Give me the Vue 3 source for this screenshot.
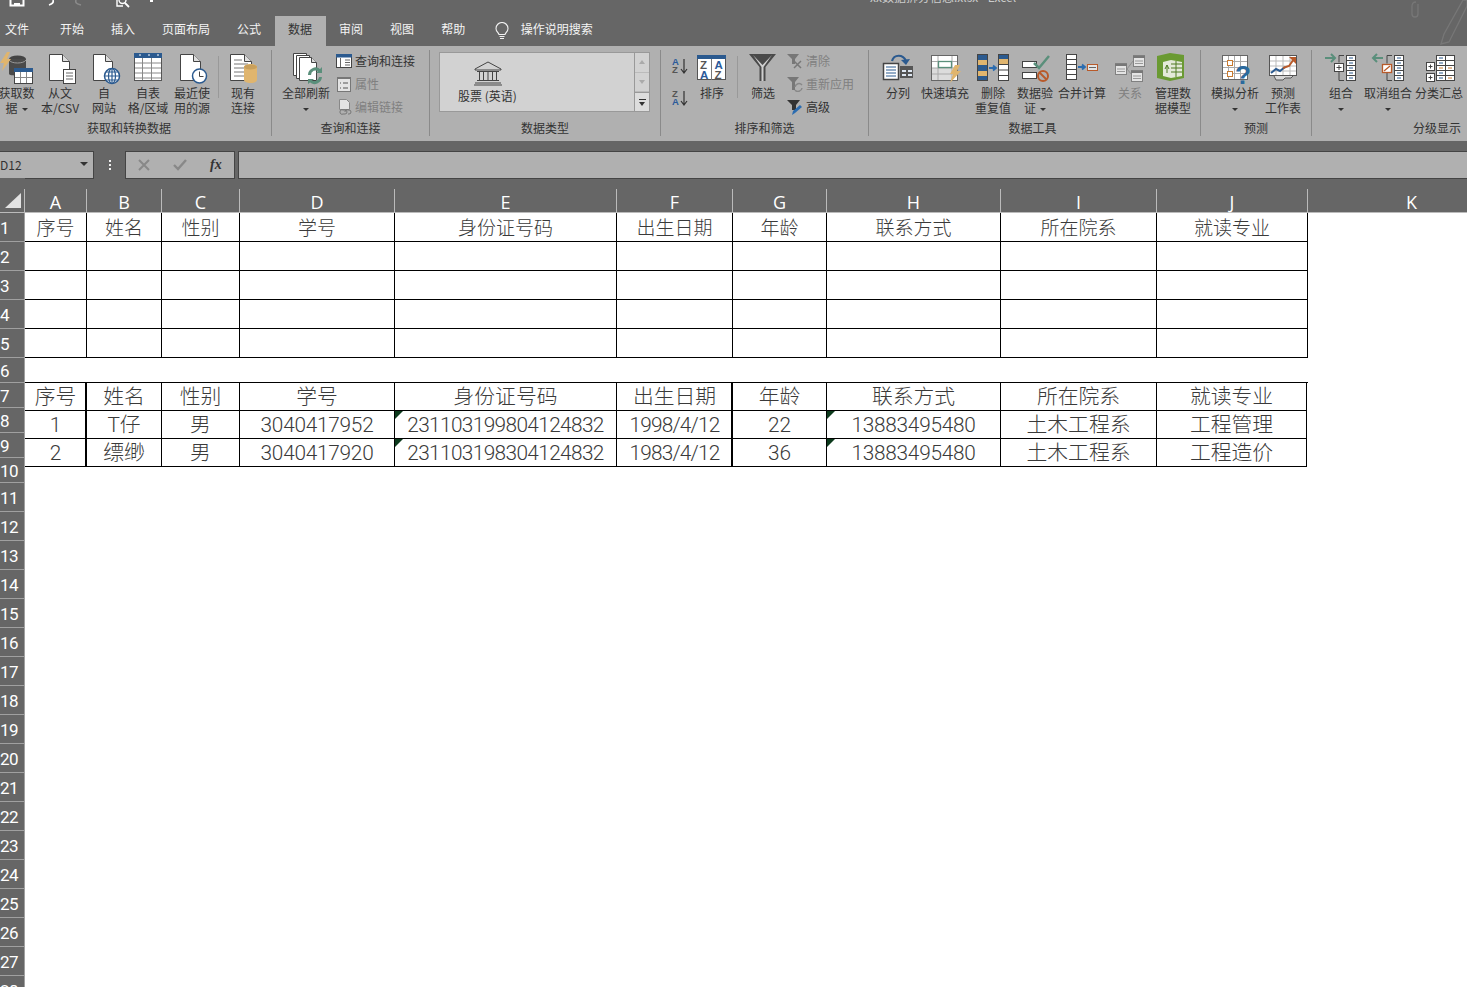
<template>
  <div class="app">
    <div class="titlebar">
      <div class="qat">
        <svg class="qat-save" width="16" height="7" viewBox="0 0 16 7"><path d="M1.500 0v5.500h13V0" fill="none" stroke="#fff" stroke-width="2"/><rect x="5" y="3" width="6" height="2" fill="#fff"/></svg>
        <svg class="qat-undo" width="8" height="6" viewBox="0 0 8 6"><path d="M6 0c1 3-1 4-4 5" fill="none" stroke="#fff" stroke-width="1.600"/></svg>
        <svg class="qat-redo" width="8" height="6" viewBox="0 0 8 6"><path d="M1 0c-1 3 1 4 5 5" fill="none" stroke="#8a8a8a" stroke-width="1.600"/></svg>
        <svg class="qat-print" width="14" height="8" viewBox="0 0 14 8"><path d="M1 0v6h6" fill="none" stroke="#fff" stroke-width="1.400"/><circle cx="6.500" cy="0" r="3.500" fill="none" stroke="#fff" stroke-width="1.400"/><path d="M9 3l4 4" stroke="#fff" stroke-width="1.800"/></svg>
        <span class="qat-caret"></span>
      </div>
      <div class="doc-title">xx数据拆分信息.xlsx - Excel</div>
      <svg class="deco" width="60" height="46" viewBox="0 0 60 46"><path d="M9 2c-3 0-4 2-4 4v8c0 4 6 4 6 0V4" fill="none" stroke="#777" stroke-width="1.300"/><path d="M34 44l3-10L56 0h4v6L42 42z" fill="none" stroke="#777" stroke-width="1.300"/></svg>
    </div>

    <div class="tabs">
      <div v-for="t in tabs" :key="t" class="tab" :class="{ active: t === '数据', first: t === '文件' }">{{ t }}</div>
      <svg class="bulb" width="14" height="18" viewBox="0 0 14 18"><path d="M4 12.500C3 10 1 9.500 1 6.500a6 6 0 0 1 12 0c0 3-2 3.500-3 6zM4.500 14.500h5M5 16.500h4" fill="none" stroke="#f2f2f2" stroke-width="1.100"/></svg>
      <div class="tell">操作说明搜索</div>
    </div>

    <div class="ribbon">
      <!-- 获取和转换数据 -->
      <div class="group g1">
        <div class="group-body">
          <div class="btn w43">
            <svg class="ic" viewBox="0 0 34 32"><ellipse cx="17.500" cy="7" rx="8.500" ry="3.500" fill="#444"/><path d="M9 7v15c0 2 17 2 17 0V7z" fill="#4a4a4a"/><path d="M9 8c2 4 15 4 17 0" fill="none" stroke="#999"/><rect x="14.500" y="16.500" width="18" height="15" fill="#fff" stroke="#444"/><rect x="14" y="16" width="19" height="4" fill="#2b5a8f"/><path d="M15 25.500h17M20.500 20v11M26.500 20v11" stroke="#888"/><path d="M7 0L0 11h4L2 19l9-12H7l3-7z" fill="#e0b56e"/></svg>
            <div class="lbl">获取数<br>据<i class="caret"></i></div>
          </div>
          <div class="btn w44">
            <svg class="ic" viewBox="0 0 34 32"><path d="M6.500 2.500h13l7 7v19h-20z" fill="#fff" stroke="#444"/><path d="M19.500 2.500v7h7" fill="#ddd" stroke="#444"/><rect x="20.500" y="17.500" width="12" height="14" fill="#fff" stroke="#444"/><path d="M23 21h7M23 24h7M23 27h7" stroke="#666"/></svg>
            <div class="lbl">从文<br>本/CSV</div>
          </div>
          <div class="btn w44">
            <svg class="ic" viewBox="0 0 34 32"><path d="M6.500 2.500h12l7 7v19h-19z" fill="#fff" stroke="#444"/><path d="M18.500 2.500v7h7" fill="#ddd" stroke="#444"/><circle cx="25" cy="24" r="7.500" fill="#fff" stroke="#2b5a8f" stroke-width="1.500"/><path d="M17 24h16M25 16v16M19 20h12M19 28h12" stroke="#2b5a8f" stroke-width="1.200"/><ellipse cx="25" cy="24" rx="3.500" ry="7.500" fill="none" stroke="#2b5a8f" stroke-width="1.200"/></svg>
            <div class="lbl">自<br>网站</div>
          </div>
          <div class="btn w44">
            <svg class="ic" viewBox="0 0 34 32"><rect x="3.500" y="1.500" width="27" height="27" fill="#fff" stroke="#555"/><rect x="3" y="1" width="28" height="5" fill="#2b5a8f"/><path d="M4 11h26M4 16h26M4 21h26M4 26h26M11.500 6v22M20.500 6v22" stroke="#888"/><path d="M8 3h2M17 3h2M26 3h2" stroke="#fff"/></svg>
            <div class="lbl">自表<br>格/区域</div>
          </div>
          <div class="btn w44">
            <svg class="ic" viewBox="0 0 34 32"><path d="M5.500 2.500h13l7 7v19h-20z" fill="#fff" stroke="#444"/><path d="M18.500 2.500v7h7" fill="#ddd" stroke="#444"/><circle cx="24.500" cy="24" r="7" fill="#fff" stroke="#2b5a8f" stroke-width="1.500"/><path d="M24.500 19.500v5h4" fill="none" stroke="#444"/></svg>
            <div class="lbl">最近使<br>用的源</div>
          </div>
          <div class="vsep sep1"></div>
          <div class="btn w42 exist">
            <svg class="ic" viewBox="0 0 34 32"><path d="M4.500 2.500h14l7 7v19h-21z" fill="#fff" stroke="#444"/><path d="M18.500 2.500v7h7" fill="#ddd" stroke="#444"/><path d="M8 8h8M8 12h14M8 16h14M8 20h14M8 24h14" stroke="#777"/><path d="M18 15c0-4 13-4 13 0v13c0 4-13 4-13 0z" fill="#e0b56e"/><ellipse cx="24.500" cy="15" rx="6.500" ry="2.500" fill="#c9a05c"/></svg>
            <div class="lbl">现有<br>连接</div>
          </div>
        </div>
        <div class="group-label">获取和转换数据</div>
      </div>

      <!-- 查询和连接 -->
      <div class="group g2">
        <div class="group-body">
          <div class="btn w50">
            <svg class="ic" viewBox="0 0 34 32"><path d="M4.500 1.500h13v22h-13z" fill="#fff" stroke="#444"/><path d="M7.500 3.500h13v23h-13z" fill="#fff" stroke="#444"/><path d="M10.500 5.500h12l5 5v18h-17z" fill="#fff" stroke="#444"/><path d="M22.500 5.500v5h5" fill="#ddd" stroke="#444"/><path d="M20.500 23a6 6 0 0 1 10-4.500M31.500 25a6 6 0 0 1-10 4" fill="none" stroke="#5a8f7b" stroke-width="3"/><path d="M27 21h6v-6zM25 27h-6v5z" fill="#5a8f7b"/></svg>
            <div class="lbl">全部刷新<br><i class="caret solo"></i></div>
          </div>
          <div class="small-col">
            <div class="small">
              <svg class="sm" viewBox="0 0 16 14"><rect x=".5" y=".5" width="15" height="13" fill="#fff" stroke="#444"/><rect y="0" width="16" height="3.500" fill="#2b5a8f"/><path d="M4.500 4v9M9 6h5M9 8.500h5M9 11h5" stroke="#666"/></svg>
              <span>查询和连接</span>
            </div>
            <div class="small off">
              <svg class="sm" viewBox="0 0 16 16"><rect x="1.500" y="1.500" width="13" height="14" fill="#e4e4e4" stroke="#777"/><rect x="1" y="1" width="14" height="2" fill="#777"/><path d="M4 7h1M7 7h5M4 12h1M7 12h5" stroke="#555"/></svg>
              <span>属性</span>
            </div>
            <div class="small off">
              <svg class="sm" viewBox="0 0 16 16"><path d="M3.500.5h7l3 3v7h-10z" fill="#e4e4e4" stroke="#888"/><path d="M4 13a2 2 0 0 1 3-2h2a2 2 0 0 1 0 4H7a2 2 0 0 1-3-2zM9 13a2 2 0 0 1 3-2h1a2 2 0 0 1 0 4h-1" fill="none" stroke="#777"/></svg>
              <span>编辑链接</span>
            </div>
          </div>
        </div>
        <div class="group-label">查询和连接</div>
      </div>

      <!-- 数据类型 -->
      <div class="group g3">
        <div class="group-body">
          <div class="gallery">
            <div class="stock">
              <svg class="stock-ic" width="28" height="25" viewBox="0 0 28 25"><path d="M14 1L1 8v1h26V8z" fill="#d2d2d2" stroke="#444"/><path d="M3 10.500h22M3 19.500h22M1 22h26M0 24h28" stroke="#444"/><path d="M5.500 10.500v9M9.500 10.500v9M14 10.500v9M18.500 10.500v9M22.500 10.500v9" stroke="#444"/></svg>
              <div class="stock-lbl">股票 (英语)</div>
            </div>
            <div class="scroll">
              <div class="sc"><i class="tri up"></i></div>
              <div class="sc"><i class="tri"></i></div>
              <div class="sc more"><b></b><i class="tri dark"></i></div>
            </div>
          </div>
        </div>
        <div class="group-label">数据类型</div>
      </div>

      <!-- 排序和筛选 -->
      <div class="group g4">
        <div class="group-body">
          <div class="sort-col">
            <svg class="sm2" viewBox="0 0 18 18"><text x="1" y="8" class="az blue">A</text><text x="1" y="16" class="az grey">Z</text><path d="M13 2v13M10 12l3 4 3-4" fill="none" stroke="#333" stroke-width="1.200"/></svg>
            <svg class="sm2" viewBox="0 0 18 18"><text x="1" y="8" class="az grey">Z</text><text x="1" y="16" class="az blue">A</text><path d="M13 2v13M10 12l3 4 3-4" fill="none" stroke="#333" stroke-width="1.200"/></svg>
          </div>
          <div class="btn w40">
            <svg class="ic" viewBox="0 0 34 32"><rect x="2.500" y="3.500" width="28" height="24" fill="#fff" stroke="#555"/><rect x="2" y="3" width="29" height="4" fill="#2b5a8f"/><path d="M16.500 7v21" stroke="#777"/><text x="5" y="17" class="az2 grey">Z</text><text x="19.500" y="17" class="az2 blue">A</text><text x="5" y="26.500" class="az2 blue">A</text><text x="19.500" y="26.500" class="az2 grey">Z</text></svg>
            <div class="lbl">排序</div>
          </div>
          <div class="vsep sep2"></div>
          <div class="btn w40">
            <svg class="ic" viewBox="0 0 34 32"><path d="M3 2h27L19.500 15v14h-6V15z" fill="#4a4a4a"/><path d="M7 3l8.500 12v14h2V15L26 3l-9.500 10z" fill="#cfcfcf"/></svg>
            <div class="lbl">筛选</div>
          </div>
          <div class="small-col filter-col">
            <div class="small off">
              <svg class="sm" viewBox="0 0 16 16"><path d="M0 1h12L8 6v5H5V6z" fill="#777"/><path d="M7 8l7 7M14 8l-7 7" stroke="#777" stroke-width="1.500"/></svg>
              <span>清除</span>
            </div>
            <div class="small off">
              <svg class="sm" viewBox="0 0 16 16"><path d="M0 1h12L8 6v8H5V6z" fill="#777"/><path d="M8 11a4 4 0 0 1 7-2M15 12a4 4 0 0 1-7 2" fill="none" stroke="#888" stroke-width="1.500"/></svg>
              <span>重新应用</span>
            </div>
            <div class="small">
              <svg class="sm" viewBox="0 0 16 16"><path d="M0 1h13L9 6v5H5V6z" fill="#333"/><path d="M5 16l1-4 7-6 2 2-7 6z" fill="#2b6cb0"/></svg>
              <span>高级</span>
            </div>
          </div>
        </div>
        <div class="group-label">排序和筛选</div>
      </div>

      <!-- 数据工具 -->
      <div class="group g5">
        <div class="group-body">
          <div class="btn w40">
            <svg class="ic" viewBox="0 0 34 32"><rect x="2.500" y="11.500" width="15" height="16" fill="#fff" stroke="#444" stroke-width="1.500"/><path d="M5 15h10M5 18h10M5 21h10M5 24h10" stroke="#2b5a8f"/><rect x="19" y="14" width="13" height="12" fill="#555"/><path d="M21 18h4v2h-4zM27 18h4v2h-4zM21 22h4v2h-4zM27 22h4v2h-4z" fill="#dfe8f2"/><path d="M11 9c2-7 11-7 14 0" fill="none" stroke="#2b5a8f" stroke-width="2.200"/><path d="M20 8l5 5 4-6z" fill="#2b5a8f"/></svg>
            <div class="lbl">分列</div>
          </div>
          <div class="btn w54">
            <svg class="ic" viewBox="0 0 34 32"><rect x="3.500" y="3.500" width="26" height="25" fill="#fff" stroke="#666"/><rect x="4" y="16" width="20" height="12" fill="#dcdcdc"/><path d="M4 9.500h25M4 16h25M4 22h25M10 4v24M24 4v24" stroke="#aaa"/><rect x="10.500" y="9.500" width="13" height="6" fill="#fff" stroke="#5a8f7b" stroke-width="1.300"/><path d="M27 13l-5 9h3l-3 9 11-12h-4l3-6z" fill="#e0b56e"/></svg>
            <div class="lbl">快速填充</div>
          </div>
          <div class="btn w42">
            <svg class="ic" viewBox="0 0 34 32"><path d="M1 2h11v6H1zM1 13h11v6H1zM1 24h11v5H1z" fill="#2b5a8f"/><path d="M1 8h11v5H1zM1 19h11v5H1z" fill="#e0b56e"/><rect x="1.500" y="2.500" width="10" height="26" fill="none" stroke="#444"/><rect x="22.500" y="2.500" width="10" height="26" fill="#fff" stroke="#444"/><path d="M23 3h9v4h-9z" fill="#2b5a8f"/><path d="M23 7h9v5h-9z" fill="#e0b56e"/><path d="M23 12.500h9M23 18h9M23 23.500h9" stroke="#444"/><path d="M13 16h6M17 13.500l3 2.500-3 2.500" fill="none" stroke="#2b6cb0" stroke-width="1.800"/></svg>
            <div class="lbl">删除<br>重复值</div>
          </div>
          <div class="btn w42">
            <svg class="ic" viewBox="0 0 34 32"><rect x="4.500" y="9.500" width="14" height="6" fill="#fff" stroke="#444"/><rect x="4.500" y="20.500" width="14" height="6" fill="#fff" stroke="#444"/><path d="M16 11l5 5 10-12" fill="none" stroke="#5a8f7b" stroke-width="2.500"/><circle cx="25" cy="24" r="5" fill="none" stroke="#b85a2a" stroke-width="2"/><path d="M21.500 20.500l7 7" stroke="#b85a2a" stroke-width="2"/></svg>
            <div class="lbl">数据验<br>证<i class="caret"></i></div>
          </div>
          <div class="btn w52">
            <svg class="ic" viewBox="0 0 34 32"><rect x="1.500" y="2.500" width="10" height="25" fill="#fff" stroke="#444"/><path d="M2 7.500h9M2 12.500h9M2 17.500h9M2 22.500h9" stroke="#444"/><path d="M13 15h6M17 12.500l3 2.500-3 2.500" fill="none" stroke="#2b6cb0" stroke-width="1.800"/><rect x="22.500" y="12.500" width="10" height="6" fill="#e4e4e4" stroke="#b85a2a"/><path d="M24 15.500h7" stroke="#666"/></svg>
            <div class="lbl">合并计算</div>
          </div>
          <div class="btn w44 dim">
            <svg class="ic" viewBox="0 0 34 32"><path d="M14 17l6-8M14 17l5 6" stroke="#8f8f8f"/><rect x="2.500" y="11.500" width="11" height="11" fill="#e4e4e4" stroke="#808080"/><rect x="20.500" y="3.500" width="11" height="11" fill="#e4e4e4" stroke="#808080"/><rect x="18.500" y="18.500" width="11" height="11" fill="#e4e4e4" stroke="#808080"/><path d="M2 12h12v2H2zM20 4h12v2H20zM18 19h12v2H18z" fill="#777"/><path d="M4 17h8M4 19.500h8M22 9h8M22 11.500h8M20 24h8M20 26.500h8" stroke="#999"/></svg>
            <div class="lbl">关系</div>
          </div>
          <div class="btn w42">
            <svg class="ic" viewBox="0 0 34 32"><path d="M1 4l13-3 14 2v23l-14 3-13-3z" fill="#6a9a32"/><path d="M7 10l8-2v18l-8-2z" fill="#e4ead8"/><path d="M15 8l11 2v14l-11 2z" fill="#e4ead8"/><path d="M15 12h11M15 16h11M15 20h11M20 9v16M9 17l2-4 2 4M11 13v8" fill="none" stroke="#4e7a22"/></svg>
            <div class="lbl">管理数<br>据模型</div>
          </div>
        </div>
        <div class="group-label">数据工具</div>
      </div>

      <!-- 预测 -->
      <div class="group g6">
        <div class="group-body">
          <div class="btn w50">
            <svg class="ic" viewBox="0 0 34 32"><rect x="4.500" y="3.500" width="25" height="24" fill="#fff" stroke="#666"/><path d="M5 9.500h24M5 15.500h24M5 21.500h24M10.500 4v23M16.500 4v23M22.500 4v23" stroke="#aaa"/><rect x="9.500" y="8.500" width="5" height="5" fill="#fff" stroke="#c87a30"/><rect x="9.500" y="19.500" width="5" height="5" fill="#fff" stroke="#c87a30"/><text x="17" y="32" class="q">?</text></svg>
            <div class="lbl">模拟分析<br><i class="caret solo"></i></div>
          </div>
          <div class="btn w46">
            <svg class="ic" viewBox="0 0 34 32"><rect x="3.500" y="3.500" width="27" height="20" fill="#fff" stroke="#555"/><path d="M4 9h26M4 14h26M4 19h26M10 4v19M17 4v19M24 4v19" stroke="#bbb"/><path d="M5 21l5-4 4 2 5-4" fill="none" stroke="#2b5a8f" stroke-width="2"/><path d="M17 16l6-2 5-7" fill="none" stroke="#b85a2a" stroke-width="2"/><path d="M23 5h7v7z" fill="#b85a2a"/><path d="M8 24l2 4h7l2-2h6l2-2" fill="#d8d8d8" stroke="#555"/></svg>
            <div class="lbl">预测<br>工作表</div>
          </div>
        </div>
        <div class="group-label">预测</div>
      </div>

      <!-- 分级显示 -->
      <div class="group g7">
        <div class="group-body">
          <div class="btn w42">
            <svg class="ic" viewBox="0 0 34 32"><path d="M1 6h10M7 2l4 4-4 4" fill="none" stroke="#5a8f7b" stroke-width="2"/><path d="M20 3.500h-5v7M15 20v8.500h5" fill="none" stroke="#444"/><rect x="10.500" y="11.500" width="9" height="8" fill="#fff" stroke="#444"/><path d="M12.500 15.500h5M15 13v5" stroke="#444"/><rect x="22.500" y="3.500" width="9" height="25" fill="#fff" stroke="#444"/><path d="M23 8.500h8M23 13.500h8M23 18.500h8M23 23.500h8" stroke="#444"/><path d="M25 6h4M25 11h4M25 16h4M25 21h4M25 26h4" stroke="#2b5a8f"/></svg>
            <div class="lbl">组合<br><i class="caret solo"></i></div>
          </div>
          <div class="btn w52">
            <svg class="ic" viewBox="0 0 34 32"><path d="M12 6H2M6 2L2 6l4 4" fill="none" stroke="#5a8f7b" stroke-width="2"/><path d="M21 3.500h-5v8M16 20v8.500h5" fill="none" stroke="#444"/><rect x="11.500" y="12.500" width="9" height="8" fill="#fff" stroke="#b85a2a" stroke-width="1.300"/><path d="M13 19l6-5" stroke="#b85a2a" stroke-width="1.300"/><rect x="23.500" y="3.500" width="9" height="25" fill="#fff" stroke="#444"/><path d="M24 8.500h8M24 13.500h8M24 18.500h8M24 23.500h8" stroke="#444"/><path d="M26 6h4M26 11h4M26 16h4M26 21h4M26 26h4" stroke="#2b5a8f"/></svg>
            <div class="lbl">取消组合<br><i class="caret solo"></i></div>
          </div>
          <div class="btn w50">
            <svg class="ic" viewBox="0 0 34 32"><rect x="14.500" y="3.500" width="18" height="25" fill="#fff" stroke="#444"/><path d="M15 8.500h17M15 13.500h17M15 18.500h17M15 23.500h17M23.500 4v24" stroke="#444"/><path d="M17 6h4M17 11h4M17 21h4M17 26h4" stroke="#2b5a8f"/><path d="M17 16h4M26 16h4M26 26h4" stroke="#c87a30"/><rect x="4.500" y="10.500" width="8" height="8" fill="#fff" stroke="#444"/><rect x="4.500" y="21.500" width="8" height="8" fill="#fff" stroke="#444"/><path d="M6.500 14.500h4M8.500 12.500v4M6.500 25.500h4M8.500 23.500v4" stroke="#444"/></svg>
            <div class="lbl">分类汇总</div>
          </div>
        </div>
        <div class="group-label right">分级显示</div>
      </div>
    </div>

    <div class="formula">
      <div class="namebox"><span>D12</span><i class="tri dark"></i></div>
      <div class="dots"><b></b><b></b><b></b></div>
      <div class="fx-box">
        <svg width="12" height="12" viewBox="0 0 12 12"><path d="M1 1l10 10M11 1L1 11" stroke="#888" stroke-width="2"/></svg>
        <svg width="14" height="12" viewBox="0 0 14 12"><path d="M1 6l4 4 8-9" fill="none" stroke="#888" stroke-width="2.400"/></svg>
        <span class="fx-f">fx</span>
      </div>
      <div class="fx-input"></div>
    </div>

    <div class="sheet">
      <div class="rowheads">
        <div class="corner"><i></i></div>
        <div v-for="r in rowHeads" :key="r.n" class="rowhead" :class="r.cls">{{ r.n }}</div>
      </div>
      <div class="body">
        <div class="colheads">
          <div v-for="c in 'ABCDEFGHIJK'" :key="c" class="colhead">{{ c }}</div>
        </div>
        <div class="grid first">
          <div v-for="h in headers" :key="h" class="cell">{{ h }}</div>
          <template v-for="n in 4" :key="n">
            <div v-for="h in headers" :key="h" class="cell"></div>
          </template>
        </div>
        <div class="grid second">
          <div v-for="h in headers" :key="h" class="cell">{{ h }}</div>
          <template v-for="row in students" :key="row[0]">
            <div v-for="(v, i) in row" :key="i" class="cell val" :class="{ flag: i === 4 || i === 7, long: i === 4, date: i === 5, num: i === 3 || i === 7 }">{{ v }}</div>
          </template>
        </div>
      </div>
    </div>
  </div>
</template>

<script setup>
const tabs = ['文件', '开始', '插入', '页面布局', '公式', '数据', '审阅', '视图', '帮助']

const headers = ['序号', '姓名', '性别', '学号', '身份证号码', '出生日期', '年龄', '联系方式', '所在院系', '就读专业']

const students = [
  ['1', 'T仔', '男', '3040417952', '231103199804124832', '1998/4/12', '22', '13883495480', '土木工程系', '工程管理'],
  ['2', '缥缈', '男', '3040417920', '231103198304124832', '1983/4/12', '36', '13883495480', '土木工程系', '工程造价']
]

// the row headers don't line up with the rows in this shot, rows 6-10 are squeezed
const rowHeads = Array.from({ length: 28 }, (_, i) => {
  const n = i + 1
  return { n, cls: n >= 6 && n <= 10 ? 'squeezed' : '' }
})
</script>

<style scoped>
.app {
  width: 1467px;
  height: 987px;
  overflow: hidden;
  background: #fff;
  font-family: "Noto Sans CJK SC", "Liberation Sans", sans-serif;
  font-size: 12px;
  color: #333;
}

.titlebar {
  height: 16px;
  background: #666;
  display: flex;
  position: relative;
}
.qat {
  display: flex;
  align-items: flex-start;
  padding-left: 9px;
}
.qat-undo { margin-left: 22px; }
.qat-redo { margin-left: 20px; }
.qat-print { margin-left: 33px; }
.qat-caret {
  margin-left: 20px;
  width: 3px;
  height: 2px;
  background: #fff;
}
.doc-title {
  position: absolute;
  left: 870px;
  top: -9px;
  font-size: 12px;
  line-height: 12px;
  color: #ccc;
}
.deco {
  position: absolute;
  right: 0;
  top: 0;
}

.tabs {
  height: 30px;
  background: #666;
  display: flex;
  align-items: stretch;
}
.tab {
  padding: 0 13.500px;
  line-height: 26px;
  color: #f4f4f4;
}
.tab.first {
  padding-left: 5px;
  padding-right: 17.500px;
}
.tab.active {
  background: #b0b0b0;
  color: #333;
}
.bulb {
  margin: 6px 0 0 16px;
}
.tell {
  margin-left: 12px;
  line-height: 26px;
  color: #f4f4f4;
}

.ribbon {
  height: 95px;
  background: #b0b0b0;
  display: flex;
  padding-top: 4px;
  box-sizing: border-box;
  margin-left: -5px;
  width: 1480px;
}
.group {
  height: 86px;
  box-sizing: border-box;
  border-right: 1px solid #8a8a8a;
  display: flex;
  flex-direction: column;
  flex: none;
}
.group-body {
  height: 72px;
  display: flex;
  align-items: flex-start;
}
.group-label {
  text-align: center;
  line-height: 16px;
  color: #333;
}
.group-label.right {
  text-align: right;
  padding-right: 19px;
}
.g1 { width: 277px; }
.g1 .group-label { padding-right: 8px; }
.g2 { width: 158px; }
.g2 .group-body { padding-left: 9px; }
.g3 { width: 231px; }
.g3 .group-body { padding-left: 9px; }
.g4 { width: 208px; }
.g4 .group-body { padding-left: 10px; }
.g5 { width: 332px; }
.g5 .group-body { padding-left: 9px; }
.g5 .group-label { padding-right: 4px; }
.g6 { width: 111px; }
.g6 .group-body { padding-left: 9px; }
.g7 { width: 168px; border-right: 0; }
.g7 .group-body { padding-left: 8px; }

.btn {
  display: flex;
  flex-direction: column;
  align-items: center;
  flex: none;
  padding-top: 2px;
}
.w40 { width: 40px; }
.w42 { width: 42px; }
.w43 { width: 43px; }
.w44 { width: 44px; }
.w46 { width: 46px; }
.w50 { width: 50px; }
.w52 { width: 52px; }
.w54 { width: 54px; }
.ic {
  width: 34px;
  height: 32px;
  flex: none;
  overflow: visible;
}
.lbl {
  margin-top: 1px;
  line-height: 15px;
  text-align: center;
  white-space: nowrap;
  color: #333;
}
.dim .lbl {
  color: #808080;
}
.caret {
  display: inline-block;
  width: 0;
  height: 0;
  margin-left: 4px;
  vertical-align: middle;
  border: 3px solid transparent;
  border-top: 3px solid #333;
  border-bottom: 0;
}
.caret.solo {
  margin-left: 0;
}
.vsep {
  width: 1px;
  height: 42px;
  background: #999;
  flex: none;
  margin-top: 6px;
}
.sep1 { margin-left: 4px; }
.exist { margin-left: 3px; }
.sep2 { margin: 6px 5px 0 5px; }

.small-col {
  display: flex;
  flex-direction: column;
  margin-left: 5px;
  margin-top: -1px;
}
.filter-col { margin-left: 4px; }
.small {
  height: 23px;
  display: flex;
  align-items: center;
  gap: 3px;
  white-space: nowrap;
}
.small.off {
  color: #808080;
}
.sm {
  width: 16px;
  height: 16px;
  flex: none;
}

.gallery {
  width: 211px;
  height: 60px;
  margin-top: 2px;
  border: 1px solid #999;
  box-sizing: border-box;
  background: #d2d2d2;
  display: flex;
}
.stock {
  flex: 1;
  padding: 8px 0 0 18px;
}
.stock-ic {
  display: block;
  margin-left: 16px;
}
.stock-lbl {
  margin-top: 1px;
  line-height: 18px;
}
.scroll {
  width: 14px;
  border-left: 1px solid #999;
  display: flex;
  flex-direction: column;
}
.sc {
  flex: 1;
  border-bottom: 1px solid #bbb;
  display: flex;
  flex-direction: column;
  align-items: center;
  justify-content: center;
}
.sc.more {
  border-top: 1px solid #999;
  border-bottom: 0;
  background: #ddd;
  flex: none;
  height: 18px;
}
.sc.more b {
  width: 7px;
  height: 1px;
  background: #333;
  margin-bottom: 2px;
}
.tri {
  width: 0;
  height: 0;
  border: 3.500px solid transparent;
  border-top: 4px solid #aaa;
  border-bottom: 0;
}
.tri.up {
  border-top: 0;
  border-bottom: 4px solid #aaa;
}
.tri.dark {
  border-top-color: #333;
}

.sort-col {
  width: 18px;
  display: flex;
  flex-direction: column;
  gap: 14px;
  padding-top: 7px;
  margin-right: 3px;
}
.sm2 {
  width: 18px;
  height: 18px;
}
.az {
  font: 700 9.500px "Liberation Sans", sans-serif;
}
.az2 {
  font: 700 11.500px "Liberation Sans", sans-serif;
}
.blue { fill: #2b5a9a; }
.grey { fill: #555; }
.q {
  font: 700 26px "Liberation Sans", sans-serif;
  fill: #2b6a9e;
}

.formula {
  height: 48px;
  background: #666;
  display: flex;
  align-items: flex-start;
  padding-top: 10px;
  box-sizing: border-box;
}
.namebox {
  width: 94px;
  height: 28px;
  box-sizing: border-box;
  background: #b0b0b0;
  border: 1px solid #444;
  border-left: 0;
  display: flex;
  align-items: center;
  justify-content: space-between;
  padding-right: 5px;
  padding-bottom: 2px;
  font-size: 12px;
  color: #333;
}
.namebox .tri {
  border-width: 4px;
  border-bottom: 0;
}
.dots {
  width: 31px;
  height: 28px;
  display: flex;
  flex-direction: column;
  align-items: center;
  justify-content: center;
  gap: 2px;
}
.dots b {
  width: 2px;
  height: 2px;
  background: #eee;
}
.fx-box {
  width: 110px;
  height: 28px;
  box-sizing: border-box;
  background: #b0b0b0;
  border: 1px solid #444;
  display: flex;
  align-items: center;
  padding-left: 12px;
  gap: 23px;
}
.fx-f {
  font: italic 700 14px "Liberation Serif", serif;
  color: #333;
}
.fx-input {
  margin-left: 3px;
  flex: 1;
  height: 28px;
  box-sizing: border-box;
  background: #b0b0b0;
  border: 1px solid #444;
  border-right: 0;
}

.sheet {
  display: flex;
  height: 798px;
  margin-top: -11px;
  padding-top: 11px;
}
.rowheads {
  width: 25px;
  flex: none;
  background: #666;
  margin-top: -11px;
  padding-top: 11px;
  box-sizing: border-box;
}
.corner {
  height: 24px;
  box-sizing: border-box;
  border-right: 1px solid #bbb;
  border-bottom: 1px solid #bbb;
  position: relative;
}
.corner i {
  position: absolute;
  left: 5px;
  top: 4px;
  width: 0;
  height: 0;
  border-left: 16px solid transparent;
  border-bottom: 15px solid #e2e2e2;
}
.rowhead {
  height: 29px;
  box-sizing: border-box;
  border-bottom: 1px solid #a0a0a0;
  border-right: 1px solid #a0a0a0;
  color: #fff;
  font: 17px/30px Roboto, "Liberation Sans", sans-serif;
  padding-left: 0;
  white-space: nowrap;
  letter-spacing: -.6px;
  overflow: hidden;
}
.rowhead.squeezed {
  height: 25px;
  line-height: 27px;
}

.body {
  flex: 1;
  min-width: 0;
  overflow: hidden;
  position: relative;
}
.colheads {
  display: grid;
  grid-template-columns: 62px 75px 78px 155px 222px 116px 94px 174px 156px 151px 208px;
  background: #666;
  box-sizing: border-box;
  border-bottom: 1px solid #bbb;
  margin-top: -11px;
  padding-top: 11px;
  height: 35px;
}
.colhead {
  color: #fff;
  font: 18px/26px "Open Sans", "Liberation Sans", sans-serif;
  text-align: center;
  box-sizing: border-box;
  border-right: 1px solid #bbb;
  height: 23px;
}

.grid {
  display: grid;
  grid-template-columns: 62px 75px 78px 155px 222px 116px 94px 174px 156px 151px;
  width: 1283px;
}
.cell {
  box-sizing: border-box;
  border-right: 1px solid #000;
  border-bottom: 1px solid #000;
  text-align: center;
  white-space: nowrap;
  overflow: hidden;
  font-family: Roboto, "Noto Sans CJK SC", sans-serif;
  font-weight: 300;
  color: #3a3a3a;
  position: relative;
}
.first .cell {
  height: 29px;
  font-size: 19px;
  line-height: 31px;
}
.second {
  margin-top: 24px;
  border-top: 1px solid #000;
  grid-template-columns: 62px 75px 78px 155px 222px 116px 94px 174px 156px 150px;
}
.second .cell {
  height: 28px;
  font-size: 20.800px;
  line-height: 29px;
}
.second .val {
  line-height: 28px;
}
.second .cell:nth-child(10n+1),
.second .cell:nth-child(10n+6) {
  border-right-width: 2px;
  padding-left: 1px;
}
.second .long {
  letter-spacing: -.62px;
}
.second .num {
  letter-spacing: -.25px;
}
.second .date {
  letter-spacing: -.8px;
}
.flag::before {
  content: "";
  position: absolute;
  left: 0;
  top: 0;
  border-top: 8px solid #0c3a1c;
  border-right: 8px solid transparent;
}
</style>

<style>
html, body {
  margin: 0;
  overflow: hidden;
  background: #fff;
}
</style>
